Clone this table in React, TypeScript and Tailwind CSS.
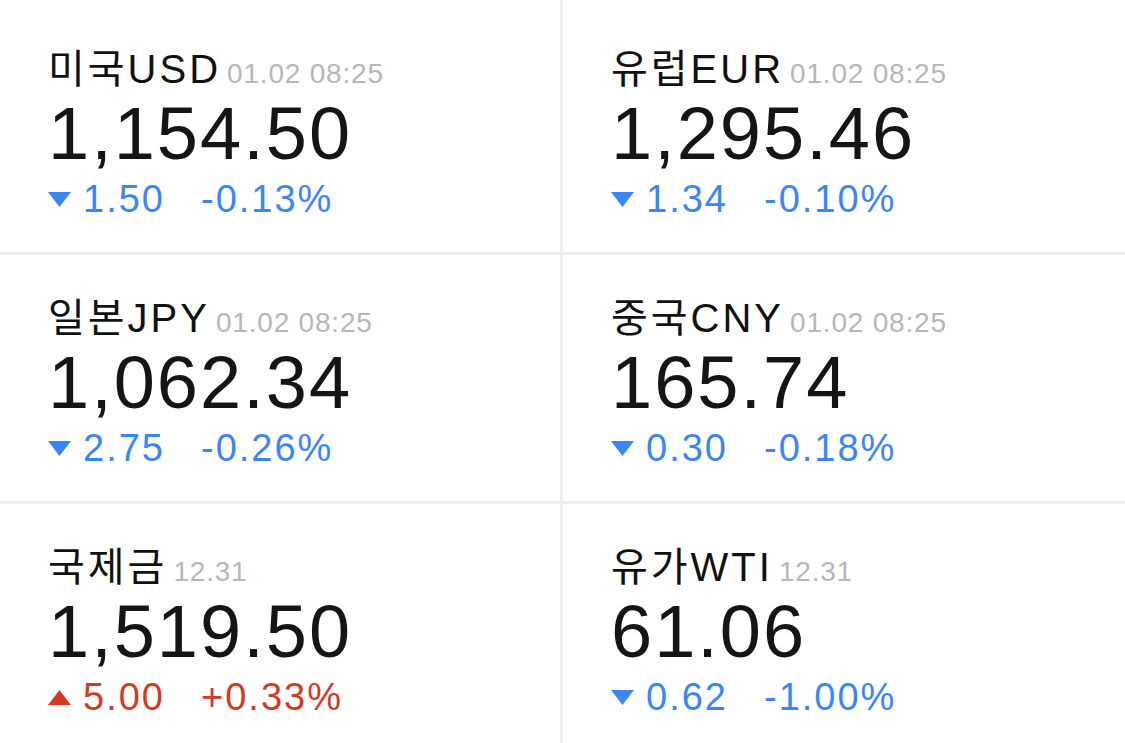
const rates = [
  { name: '미국USD', time: '01.02 08:25', value: '1,154.50', change: '1.50', pct: '-0.13%', up: false },
  { name: '유럽EUR', time: '01.02 08:25', value: '1,295.46', change: '1.34', pct: '-0.10%', up: false },
  { name: '일본JPY', time: '01.02 08:25', value: '1,062.34', change: '2.75', pct: '-0.26%', up: false },
  { name: '중국CNY', time: '01.02 08:25', value: '165.74', change: '0.30', pct: '-0.18%', up: false },
  { name: '국제금', time: '12.31', value: '1,519.50', change: '5.00', pct: '+0.33%', up: true },
  { name: '유가WTI', time: '12.31', value: '61.06', change: '0.62', pct: '-1.00%', up: false },
];

type Rate = (typeof rates)[number];

function Arrow({ up }: { up: boolean }) {
  return (
    <svg width="23" height="15" viewBox="0 0 23 15" className="shrink-0">
      {up ? <polygon points="0,15 23,15 11.5,0" fill="#d33a22" /> : <polygon points="0,0 23,0 11.5,15" fill="#3b86f7" />}
    </svg>
  );
}

function Cell({ rate, first, left }: { rate: Rate; first: boolean; left: boolean }) {
  const color = rate.up ? 'text-[#d33a22]' : 'text-[#3b86f7]';
  return (
    <div
      className={`border-[#eeeeee] pl-12 ${first ? 'pt-[45px]' : 'pt-[39px]'} ${left ? 'border-r-[3px]' : ''} border-b-[3px]`}
    >
      <div className="text-[40px] leading-[48px] text-[#111111] tracking-[3px] whitespace-nowrap">
        {rate.name}
        <span className="ml-1.5 text-[28px] leading-none text-[#b7b7b7] tracking-[0.8px]">{rate.time}</span>
      </div>
      <div className="mt-px text-[74px] leading-[80px] text-[#151515] tracking-[2px]">{rate.value}</div>
      <div className={`mt-[3px] flex items-center text-[38px] leading-[44px] tracking-[2px] ${color}`}>
        <Arrow up={rate.up} />
        <span className="ml-3 w-[118px]">{rate.change}</span>
        <span>{rate.pct}</span>
      </div>
    </div>
  );
}

export default function App() {
  return (
    <div className="h-[743px] w-[1125px] overflow-hidden bg-white font-['Liberation_Sans','Noto_Sans_CJK_KR',sans-serif]">
      <div className="grid grid-cols-[563px_1fr] grid-rows-[255px_249px_249px]">
        {rates.map((r, i) => (
          <Cell key={r.name} rate={r} first={i < 2} left={i % 2 === 0} />
        ))}
      </div>
    </div>
  );
}
